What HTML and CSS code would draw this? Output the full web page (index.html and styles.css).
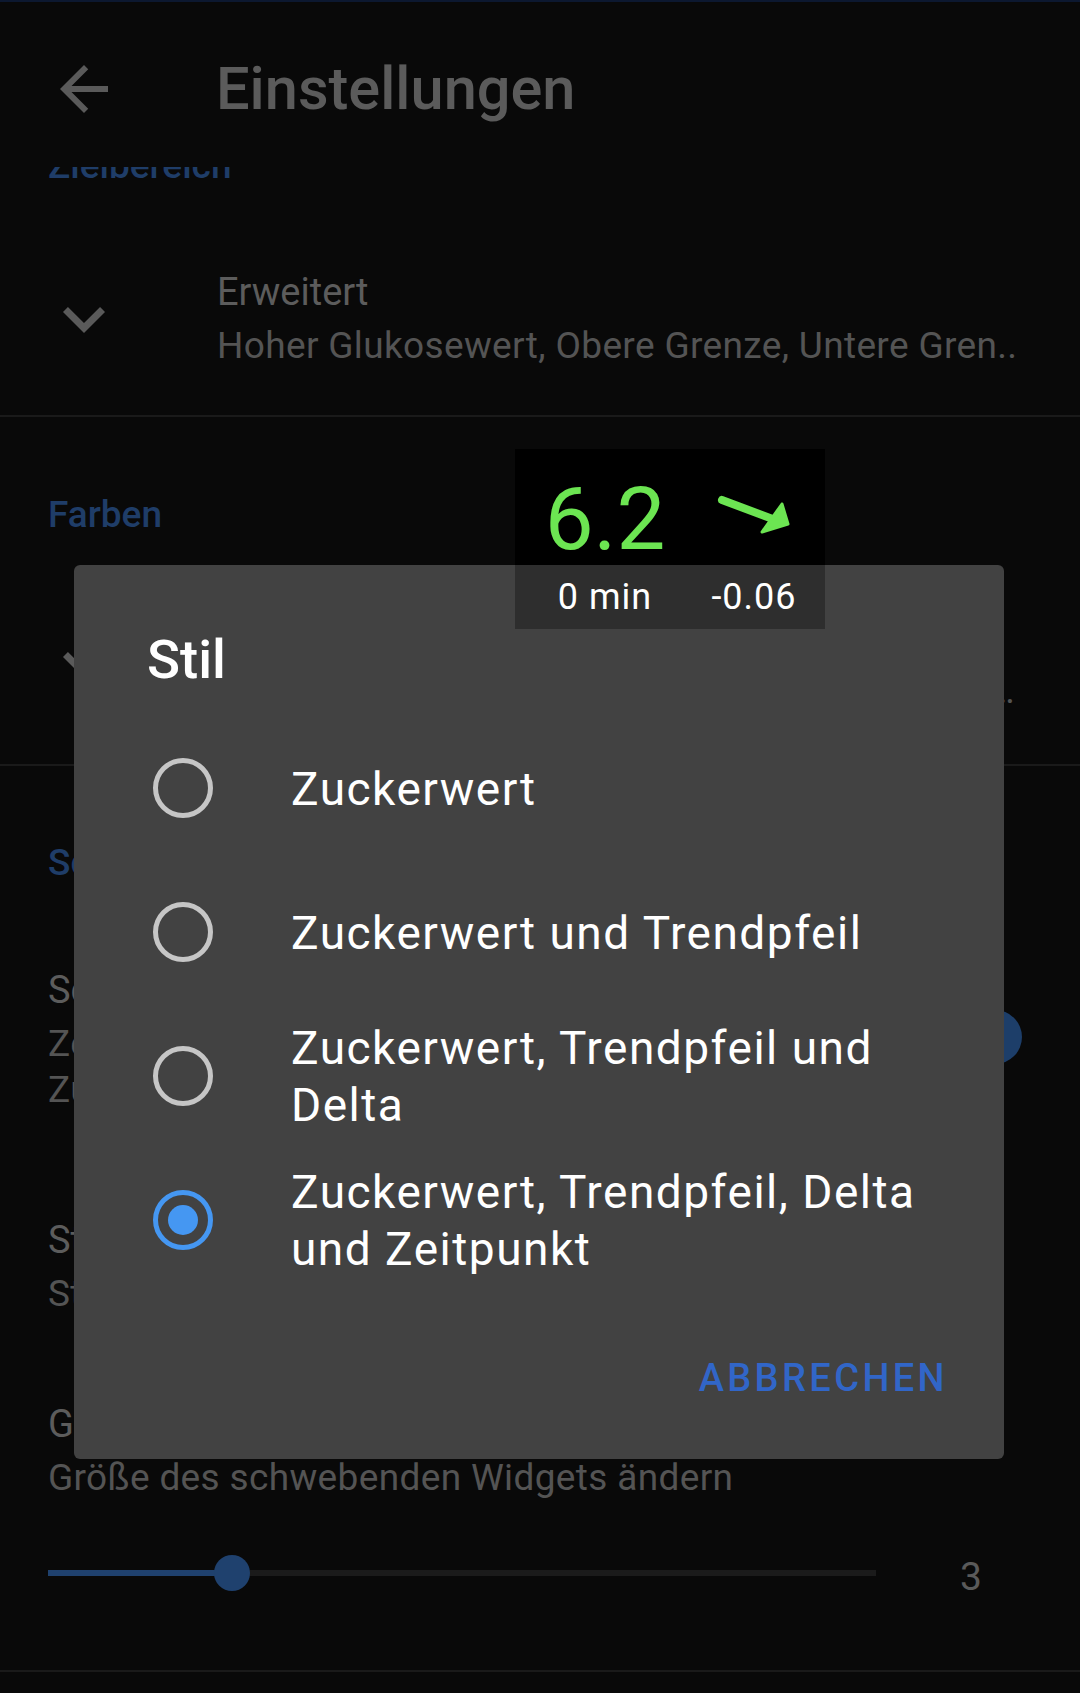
FILE: index.html
```html
<!DOCTYPE html>
<html lang="de">
<head>
<meta charset="utf-8">
<title>Einstellungen</title>
<link rel="stylesheet" href="styles.css">
</head>
<body>
<div class="screen">
  <header class="toolbar">
    <svg class="back" viewBox="0 0 24 24"><path d="M20 11H7.83l5.59-5.59L12 4l-8 8 8 8 1.41-1.41L7.83 13H20v-2z"/></svg>
    <h1 class="title">Einstellungen</h1>
  </header>

  <main class="list">
    <div class="category cat-first">Zielbereich</div>
    <div class="pref pref-expand">
      <svg class="chev" viewBox="0 0 24 24"><path d="M16.59 8.59L12 13.17 7.41 8.59 6 10l6 6 6-6z"/></svg>
      <div class="pref-text">
        <div class="pref-title">Erweitert</div>
        <div class="pref-summary">Hoher Glukosewert, Obere Grenze, Untere Gren..</div>
      </div>
    </div>
    <div class="divider"></div>

    <div class="category">Farben</div>
    <div class="pref pref-expand pref-farben">
      <svg class="chev" viewBox="0 0 24 24"><path d="M16.59 8.59L12 13.17 7.41 8.59 6 10l6 6 6-6z"/></svg>
      <div class="pref-text">
        <div class="pref-title">Erweitert</div>
        <div class="pref-summary">Farbe für hohen Wert, Farbe für Zielbereich, Farbe für niedrigen Wert</div>
      </div>
    </div>
    <div class="divider"></div>

    <div class="category cat-widget">Schwebendes Widget</div>
    <div class="pref pref-switch">
      <div class="pref-text">
        <div class="pref-title">Schwebendes Widget anzeigen</div>
        <div class="pref-summary wrap">Zeigt den Zuckerwert als schwebendes Widget an.<br>Zum Verschieben gedrückt halten</div>
      </div>
      <div class="switch"><span class="switch-track"></span><span class="switch-thumb"></span></div>
    </div>
    <div class="pref pref-stil">
      <div class="pref-text">
        <div class="pref-title">Stil</div>
        <div class="pref-summary">Stil des schwebenden Widgets</div>
      </div>
    </div>
    <div class="pref pref-size">
      <div class="pref-title">Größe</div>
      <div class="pref-summary">Größe des schwebenden Widgets ändern</div>
      <div class="slider">
        <div class="slider-track">
          <div class="slider-fill" style="width:184px"></div>
          <div class="slider-thumb" style="left:184px"></div>
        </div>
        <div class="slider-value">3</div>
      </div>
    </div>
    <div class="divider"></div>
  </main>

  <div class="dialog">
    <h2 class="dialog-title">Stil</h2>
    <ul class="options">
      <li class="option"><span class="radio"></span><span class="option-label">Zuckerwert</span></li>
      <li class="option"><span class="radio"></span><span class="option-label">Zuckerwert und Trendpfeil</span></li>
      <li class="option"><span class="radio"></span><span class="option-label">Zuckerwert, Trendpfeil und Delta</span></li>
      <li class="option"><span class="radio checked"></span><span class="option-label">Zuckerwert, Trendpfeil, Delta und Zeitpunkt</span></li>
    </ul>
    <div class="dialog-actions"><span class="btn">ABBRECHEN</span></div>
  </div>

  <div class="widget">
    <div class="widget-main">
      <span class="widget-value">6.2</span>
      <svg class="widget-arrow" viewBox="0 0 84 50">
        <line x1="10" y1="10" x2="66" y2="31" stroke="#6ce552" stroke-width="8" stroke-linecap="round"/>
        <polygon points="76,34 70,14 50,42" fill="#6ce552" stroke="#6ce552" stroke-width="3" stroke-linejoin="round"/>
      </svg>
    </div>
    <div class="widget-sub"><span>0 min</span><span>-0.06</span></div>
  </div>
</div>
</body>
</html>
```

FILE: styles.css
```css
body {
  margin: 0;
  background: #090909;
  font-family: Roboto, "Liberation Sans", Arial, sans-serif;
}

.screen {
  position: relative;
  width: 1080px;
  height: 1693px;
  overflow: hidden;
  border-top: 2px solid #0c1830;
  box-sizing: border-box;
  background: #090909;
}

/* toolbar */
.toolbar {
  height: 165px;
  display: flex;
  align-items: center;
  padding: 8px 0 0 48px;
  box-sizing: border-box;
}
.back {
  width: 72px;
  height: 72px;
  flex: none;
  fill: #5a5a5a;
}
.title {
  margin: 0 0 0 96px;
  font-size: 59.5px;
  font-weight: 500;
  line-height: 70px;
  color: #5b5b5b;
}

/* list */
.list {
  height: 1526px;
  overflow: hidden;
}
.category {
  padding: 76px 0 0 48px;
  font-size: 37px;
  font-weight: 500;
  line-height: 44px;
  color: #1f3d68;
}
.cat-first {
  padding-top: 0;
  margin-top: -23px;
}
.cat-widget {
  padding-top: 75px;
}
.divider {
  height: 2px;
  background: #1a1a1a;
}

.pref {
  display: flex;
  align-items: center;
  padding: 80px 58px 46px 48px;
}
.pref-expand {
  padding-left: 42px;
}
.pref-farben {
  padding-top: 76px;
  padding-bottom: 50px;
}
.pref-switch {
  padding-top: 81px;
  padding-bottom: 50px;
}
.pref-stil {
  padding-top: 53px;
  padding-bottom: 33px;
}
.pref-size {
  display: block;
  padding-top: 50px;
  padding-bottom: 67px;
}
.chev {
  width: 84px;
  height: 84px;
  flex: none;
  margin-right: 91px;
  fill: #5a5a5a;
}
.pref-text {
  flex: 1;
  min-width: 0;
}
.pref-title {
  font-size: 38px;
  line-height: 48px;
  color: #5c5c5c;
}
.pref-summary {
  margin-top: 7px;
  font-size: 37px;
  letter-spacing: 0.35px;
  line-height: 46px;
  color: #545454;
  white-space: nowrap;
  overflow: hidden;
  text-overflow: ellipsis;
}
.pref-summary.wrap {
  white-space: normal;
}

/* switch */
.switch {
  position: relative;
  width: 100px;
  height: 54px;
  flex: none;
  margin: 0 0 6px 20px;
}
.switch-track {
  position: absolute;
  left: 10px;
  right: 10px;
  top: 10px;
  height: 34px;
  border-radius: 17px;
  background: #122640;
}
.switch-thumb {
  position: absolute;
  right: 0;
  top: 0;
  width: 54px;
  height: 54px;
  border-radius: 50%;
  background: #1d3e69;
}

/* slider */
.slider {
  display: flex;
  align-items: center;
  height: 60px;
  margin-top: 42px;
}
.slider-track {
  position: relative;
  width: 828px;
  height: 6px;
  background: #1b1b1b;
  flex: none;
}
.slider-fill {
  height: 100%;
  background: #1f416e;
}
.slider-thumb {
  position: absolute;
  top: -15px;
  width: 36px;
  height: 36px;
  margin-left: -18px;
  border-radius: 50%;
  background: #1f416e;
}
.slider-value {
  width: 80px;
  margin-left: 55px;
  margin-top: 8px;
  text-align: center;
  font-size: 39px;
  line-height: 46px;
  color: #5a5a5a;
}

/* dialog */
.dialog {
  position: absolute;
  left: 74px;
  top: 563px;
  width: 930px;
  box-sizing: border-box;
  padding: 62px 56px 59px 0;
  background: #424242;
  border-radius: 6px;
}
.dialog-title {
  margin: 0 0 0 73px;
  font-size: 54.5px;
  font-weight: 500;
  line-height: 64px;
  color: #ffffff;
}
.options {
  list-style: none;
  margin: 25px 0 0;
  padding: 0;
}
.option {
  height: 144px;
  display: flex;
  align-items: center;
  padding: 0 8px 0 79px;
}
.radio {
  width: 60px;
  height: 60px;
  box-sizing: border-box;
  border: 5px solid #c6c6c6;
  border-radius: 50%;
  flex: none;
  margin-right: 78px;
  display: flex;
  align-items: center;
  justify-content: center;
}
.radio.checked {
  border-color: #4597f2;
}
.radio.checked::after {
  content: "";
  width: 30px;
  height: 30px;
  border-radius: 50%;
  background: #4597f2;
}
.option-label {
  flex: 1;
  padding-top: 2px;
  font-size: 46px;
  letter-spacing: 1.5px;
  line-height: 57px;
  color: #ffffff;
}
.dialog-actions {
  display: flex;
  justify-content: flex-end;
  margin-top: 64px;
}
.btn {
  font-size: 38px;
  font-weight: 500;
  letter-spacing: 3.4px;
  line-height: 44px;
  color: #3166c8;
}

/* floating widget */
.widget {
  position: absolute;
  left: 515px;
  top: 447px;
  width: 310px;
}
.widget-main {
  height: 116px;
  background: #000000;
  display: grid;
  grid-template-columns: 140px 140px;
  column-gap: 9px;
  padding-left: 20px;
  align-items: start;
}
.widget-value {
  margin-top: 27px;
  font-size: 87px;
  line-height: 87px;
  text-align: center;
  color: #6ce552;
}
.widget-arrow {
  width: 84px;
  height: 50px;
  margin-top: 41px;
  justify-self: center;
}
.widget-sub {
  height: 64px;
  background: #2e2e2e;
  display: grid;
  grid-template-columns: 140px 140px;
  column-gap: 9px;
  padding-left: 20px;
  font-size: 36px;
  letter-spacing: 1px;
  line-height: 64px;
  text-align: center;
  color: #ffffff;
}
```
